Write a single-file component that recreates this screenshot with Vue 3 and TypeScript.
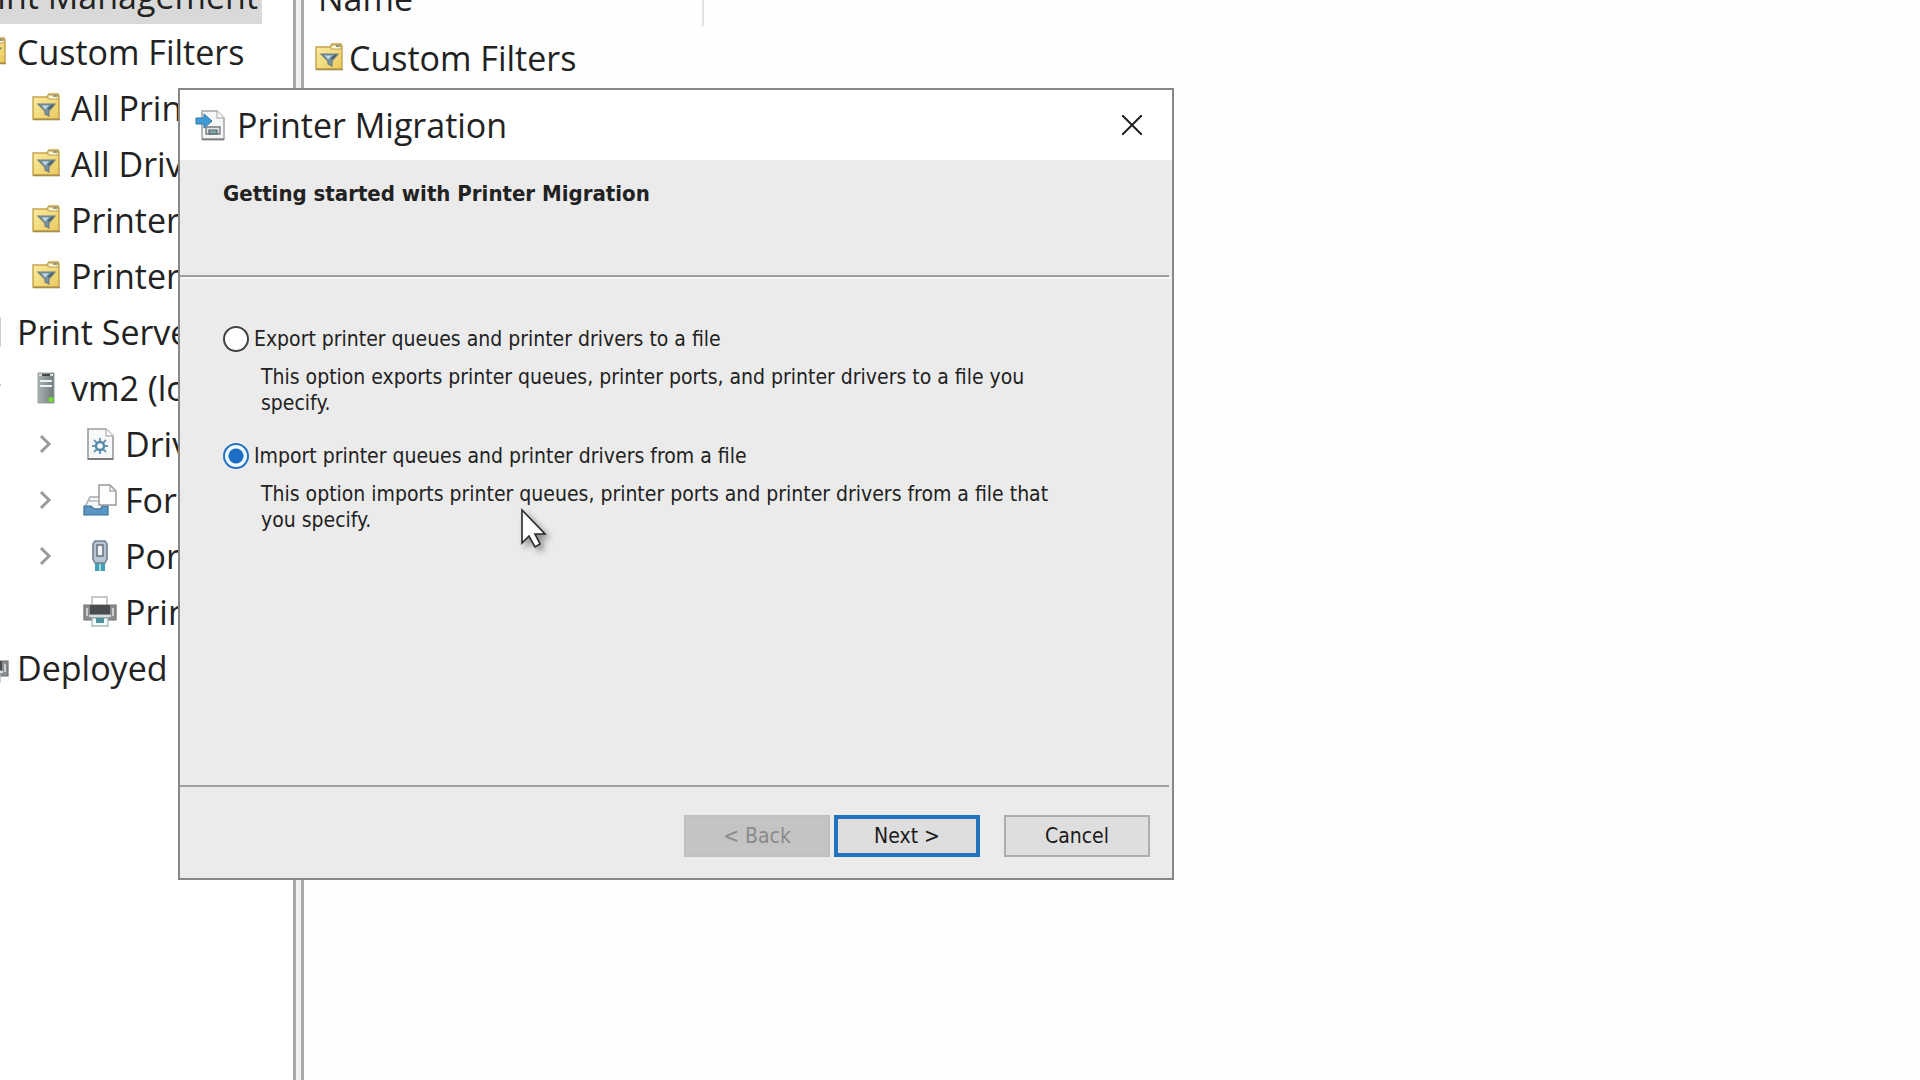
<script setup lang="ts">
import { ref } from 'vue'

type IconName = 'filter' | 'server' | 'driver' | 'form' | 'port' | 'printer' | 'none'

interface TreeRow {
  label: string
  level: number
  icon: IconName
  chevron?: 'right' | 'down'
  selected?: boolean
}

const rows: TreeRow[] = [
  { label: 'Print Management', level: 0, icon: 'none', selected: true },
  { label: 'Custom Filters', level: 1, icon: 'filter' },
  { label: 'All Printers', level: 2, icon: 'filter' },
  { label: 'All Drivers', level: 2, icon: 'filter' },
  { label: 'Printers Not Ready', level: 2, icon: 'filter' },
  { label: 'Printers With Jobs', level: 2, icon: 'filter' },
  { label: 'Print Servers', level: 1, icon: 'server' },
  { label: 'vm2 (local)', level: 2, icon: 'server', chevron: 'down' },
  { label: 'Drivers', level: 3, icon: 'driver', chevron: 'right' },
  { label: 'Forms', level: 3, icon: 'form', chevron: 'right' },
  { label: 'Ports', level: 3, icon: 'port', chevron: 'right' },
  { label: 'Printers', level: 3, icon: 'printer' },
  { label: 'Deployed Printers', level: 1, icon: 'printer' },
]

const indent = (level: number) => ({ marginLeft: `${level * 54 - 128}px` })

const action = ref<'export' | 'import'>('import')
</script>

<template>
  <div class="console">
    <svg class="sprite" aria-hidden="true">
      <defs>
        <linearGradient id="folder-fill" x1="0" y1="0" x2="1" y2="1">
          <stop offset="0" stop-color="#fbeea6" />
          <stop offset="1" stop-color="#ebca5c" />
        </linearGradient>
        <linearGradient id="server-fill" x1="0" y1="0" x2="1" y2="0">
          <stop offset="0" stop-color="#a9b1b2" />
          <stop offset="1" stop-color="#6f797b" />
        </linearGradient>
        <symbol id="icon-filter" viewBox="0 0 34 34">
          <path d="M4 6h14l2-3h9l1 2v23H4z" fill="url(#folder-fill)" stroke="#c3a24a" stroke-width="1.4" />
          <path d="M19 4h10v4H19z" fill="#fdf6cf" stroke="#b9a05a" stroke-width="1" />
          <path d="M24 5h4" stroke="#6f7f78" stroke-width="1.5" />
          <path d="M4 28.500h27" stroke="#a78e4b" stroke-width="1.600" />
          <path d="M9 13h17l-6 7v5l-4-2v-3z" fill="#7392a1" stroke="#6d7f86" stroke-width="1.200" />
          <path d="M13 14.500h7l-4 4z" fill="#c3dbe6" />
          <path d="M19 18l5-4" stroke="#40545e" stroke-width="1.600" />
        </symbol>
        <symbol id="icon-server" viewBox="0 0 34 34">
          <path d="M9 2h16v30H9z" fill="url(#server-fill)" stroke="#98a0a1" stroke-width="1" />
          <path d="M10 3h14v2H10z" fill="#d7dcdc" />
          <path d="M13 4h8" stroke="#333" stroke-width="1.800" />
          <path d="M11 10h12M11 15h12" stroke="#eef1f1" stroke-width="1.800" />
          <circle cx="22" cy="28.500" r="2.600" fill="#6fdc2f" />
        </symbol>
        <symbol id="icon-driver" viewBox="0 0 34 34">
          <path d="M5 2h18l7 7v23H5z" fill="#f6f8f9" stroke="#9a9a9a" stroke-width="1.600" />
          <path d="M23 2v7h7" fill="#fff" stroke="#b4b4b4" stroke-width="1.300" />
          <path d="M5 32h25" stroke="#777" stroke-width="1.800" />
          <path d="M17 11v16M9 19h16M11 13l12 12M23 13L11 25" stroke="#6c9ab5" stroke-width="2" />
          <circle cx="17" cy="19" r="4" fill="#f6f8f9" stroke="#5788a5" stroke-width="2.400" />
        </symbol>
        <symbol id="icon-form" viewBox="0 0 34 34">
          <path d="M3 22l4-8h12v12H3z" fill="#f4f6f7" stroke="#a5a9ab" stroke-width="1.400" />
          <path d="M6 18h13" stroke="#b5b9bb" stroke-width="1.400" />
          <path d="M1 23h7l3 3h6l3-3h5v9H1z" fill="#5b97c4" stroke="#3d6f96" stroke-width="1.200" />
          <path d="M16 2h11l6 6v14H16z" fill="#fdfdfd" stroke="#999" stroke-width="1.500" />
          <path d="M27 2v6h6" fill="none" stroke="#aaa" stroke-width="1.300" />
        </symbol>
        <symbol id="icon-port" viewBox="0 0 34 34">
          <path d="M12 24h10v8H12z" fill="#3fa3b5" />
          <path d="M17 25v7" stroke="#bfe6ec" stroke-width="1.600" />
          <path d="M12 2h10l2 3v15l-2 4H12l-2-4V5z" fill="#b9c6d1" stroke="#76838e" stroke-width="1.600" />
          <path d="M14 6h6v11h-6z" fill="#eef2f6" stroke="#66727c" stroke-width="1.500" />
        </symbol>
        <symbol id="icon-printer" viewBox="0 0 34 34">
          <path d="M9 2h15v9H9z" fill="#fff" stroke="#b5b5b5" stroke-width="1.400" />
          <path d="M1 10h32v15H1z" fill="#8a8d8f" stroke="#6d7072" stroke-width="1.200" />
          <path d="M4 13v8M30 13v8" stroke="#d3d5d6" stroke-width="1.800" />
          <path d="M7 10h20v9H7z" fill="#4a4c4d" />
          <path d="M6 20h22v2H6z" fill="#d9dcdd" />
          <path d="M9 23h16v8H9z" fill="#f1fafa" stroke="#a7b9bb" stroke-width="1.300" />
          <path d="M13 23h8v5h-8z" fill="#4f929b" />
        </symbol>
        <symbol id="icon-migration" viewBox="0 0 34 34">
          <path d="M8 3h15l7 7v21H8z" fill="#f5f6f6" stroke="#a2a2a2" stroke-width="1.500" />
          <path d="M23 3v7h7" fill="#fff" stroke="#b8b8b8" stroke-width="1.300" />
          <path d="M8 31.500h22" stroke="#808080" stroke-width="1.800" />
          <path d="M12 19h14v7H12z" fill="#dfe3e4" stroke="#777d80" stroke-width="1.400" />
          <path d="M15 22h8v4h-8z" fill="#7ba7ac" stroke="#5f6668" stroke-width="1.200" />
          <path d="M2 10h8V6l8 7-8 7v-4H2z" fill="#3f9bd6" stroke="#2a78ad" stroke-width="1" />
        </symbol>
      </defs>
    </svg>

    <nav class="tree" aria-label="Console tree">
      <ul>
        <li v-for="row in rows" :key="row.label + row.level" class="node" :style="indent(row.level)">
          <span class="twisty">
            <svg v-if="row.chevron" viewBox="0 0 24 24" width="24" height="24" aria-hidden="true">
              <path
                :d="row.chevron === 'right' ? 'M7 4l8 8-8 8' : 'M4 8l8 8 8-8'"
                fill="none"
                stroke="#9a9a9a"
                stroke-width="3"
              />
            </svg>
          </span>
          <svg class="glyph" aria-hidden="true"><use :href="'#icon-' + row.icon" /></svg>
          <span class="label" :class="{ selected: row.selected }">{{ row.label }}</span>
        </li>
      </ul>
    </nav>
    <div class="splitter"></div>
    <main class="list">
      <table>
        <thead>
          <tr>
            <th scope="col">Name</th>
          </tr>
        </thead>
        <tbody>
          <tr>
            <td>
              <div class="cell">
                <svg class="glyph" aria-hidden="true"><use href="#icon-filter" /></svg>
                <span>Custom Filters</span>
              </div>
            </td>
          </tr>
        </tbody>
      </table>
    </main>

    <form class="dialog" role="dialog" aria-labelledby="dialog-title" @submit.prevent>
      <header class="titlebar">
        <svg class="glyph" aria-hidden="true"><use href="#icon-migration" /></svg>
        <h1 id="dialog-title">Printer Migration</h1>
        <button class="close" type="button" aria-label="Close">
          <svg viewBox="0 0 20 20" width="20" height="20" aria-hidden="true">
            <path d="M0 0l20 20M20 0L0 20" stroke="#222" stroke-width="2" />
          </svg>
        </button>
      </header>
      <section class="banner">
        <h2>Getting started with Printer Migration</h2>
      </section>
      <section class="options">
        <div class="option">
          <div class="choice">
            <input id="export" v-model="action" type="radio" name="action" value="export" />
            <label for="export">Export printer queues and printer drivers to a file</label>
          </div>
          <p>This option exports printer queues, printer ports, and printer drivers to a file you<br />specify.</p>
        </div>
        <div class="option">
          <div class="choice">
            <input id="import" v-model="action" type="radio" name="action" value="import" />
            <label for="import">Import printer queues and printer drivers from a file</label>
          </div>
          <p>This option imports printer queues, printer ports and printer drivers from a file that<br />you specify.</p>
        </div>
      </section>
      <footer class="actions">
        <button type="button" class="push" disabled>&lt; Back</button>
        <button type="submit" class="push primary">Next &gt;</button>
        <button type="button" class="push cancel">Cancel</button>
      </footer>
    </form>

    <svg class="pointer" viewBox="0 0 34 46" width="34" height="46" aria-hidden="true">
      <path d="M2 2v33l7-7 6 11 5-3-5-10h10z" fill="#fff" stroke="#2a2a2a" stroke-width="1.600" />
    </svg>
  </div>
</template>

<style>
body {
  margin: 0;
  background: #fff;
}
</style>

<style scoped>
.console {
  position: relative;
  display: flex;
  height: 100vh;
  overflow: hidden;
  color: #222;
  background: #fff;
  font: 34px/56px "Open Sans", "Noto Sans", sans-serif;
}

.sprite {
  position: absolute;
  width: 0;
  height: 0;
}

.glyph {
  flex: none;
  width: 34px;
  height: 34px;
}

.tree {
  flex: none;
  width: 293px;
  overflow: hidden;
}

.tree ul {
  margin: -32px 0 0;
  padding: 0;
  list-style: none;
}

.node {
  display: flex;
  align-items: center;
  height: 56px;
  white-space: nowrap;
}

.twisty {
  flex: none;
  display: flex;
  width: 24px;
  margin-right: 25px;
}

.label {
  padding: 0 4px 0 8px;
}

.selected {
  background: #d9d9d9;
}

.splitter {
  flex: none;
  width: 5px;
  border: solid #a9a9ad;
  border-width: 0 3px;
  background: #f0f0f0;
}

.list {
  flex: 1;
  overflow: hidden;
  background: #fefefe;
}

.list table {
  width: 400px;
  margin-top: -30px;
  border-collapse: collapse;
}

.list th {
  padding: 0 14px;
  border-right: 2px solid #e2e2e2;
  font-weight: 400;
  text-align: left;
}

.list td {
  padding: 4px 8px;
}

.cell {
  display: flex;
  align-items: center;
  gap: 3px;
}

.dialog {
  position: absolute;
  top: 88px;
  left: 178px;
  box-sizing: border-box;
  width: min(996px, calc(100vw - 178px));
  border: 2px solid #888;
  background: #ebebeb;
  font: 21px/26px "DejaVu Sans Condensed", "DejaVu Sans", sans-serif;
}

.titlebar {
  display: flex;
  align-items: center;
  height: 70px;
  padding: 0 14px;
  background: #fff;
}

.titlebar h1 {
  flex: 1;
  margin: 0 0 0 9px;
  font: 400 34px/56px "Open Sans", "Noto Sans", sans-serif;
}

.close {
  display: flex;
  padding: 16px;
  border: 0;
  background: transparent;
}

.banner {
  height: 94px;
  margin-right: 3px;
  padding: 21px 43px 0;
  border-bottom: 2px solid #9f9f9f;
}

.banner h2 {
  margin: 0;
  font-size: 22px;
  line-height: 26px;
  font-weight: 700;
}

.options {
  box-sizing: border-box;
  min-height: 508px;
  padding: 45px 43px 0;
  border-top: 2px solid #f6f6f6;
}

.option {
  margin-bottom: 25px;
}

.choice {
  display: flex;
  align-items: center;
  gap: 5px;
  height: 30px;
}

.choice input {
  appearance: none;
  box-sizing: border-box;
  width: 26px;
  height: 26px;
  margin: 0;
  border: 2px solid #444;
  border-radius: 50%;
  background: #fff;
}

.choice input:checked {
  border-color: #2374bd;
  background: radial-gradient(circle, #1c6fc4 0 7px, #f2fbff 8px);
}

.option p {
  margin: 10px 0 0 38px;
}

.actions {
  display: flex;
  justify-content: flex-end;
  gap: 4px;
  margin-right: 3px;
  padding: 28px 19px 21px;
  border-top: 2px solid #9f9f9f;
}

.push {
  box-sizing: border-box;
  width: 146px;
  height: 42px;
  padding: 0;
  border: 2px solid #adadad;
  color: #1a1a1a;
  background: #dedede;
  font: inherit;
}

.push:disabled {
  border-color: #bfbfbf;
  color: #8a8a8a;
  background: #c4c4c4;
}

.primary {
  border: 4px solid #2372bd;
}

.cancel {
  margin-left: 20px;
}

.pointer {
  position: absolute;
  top: 508px;
  left: 520px;
  filter: drop-shadow(4px 4px 3px rgba(0, 0, 0, 0.4));
}
</style>
